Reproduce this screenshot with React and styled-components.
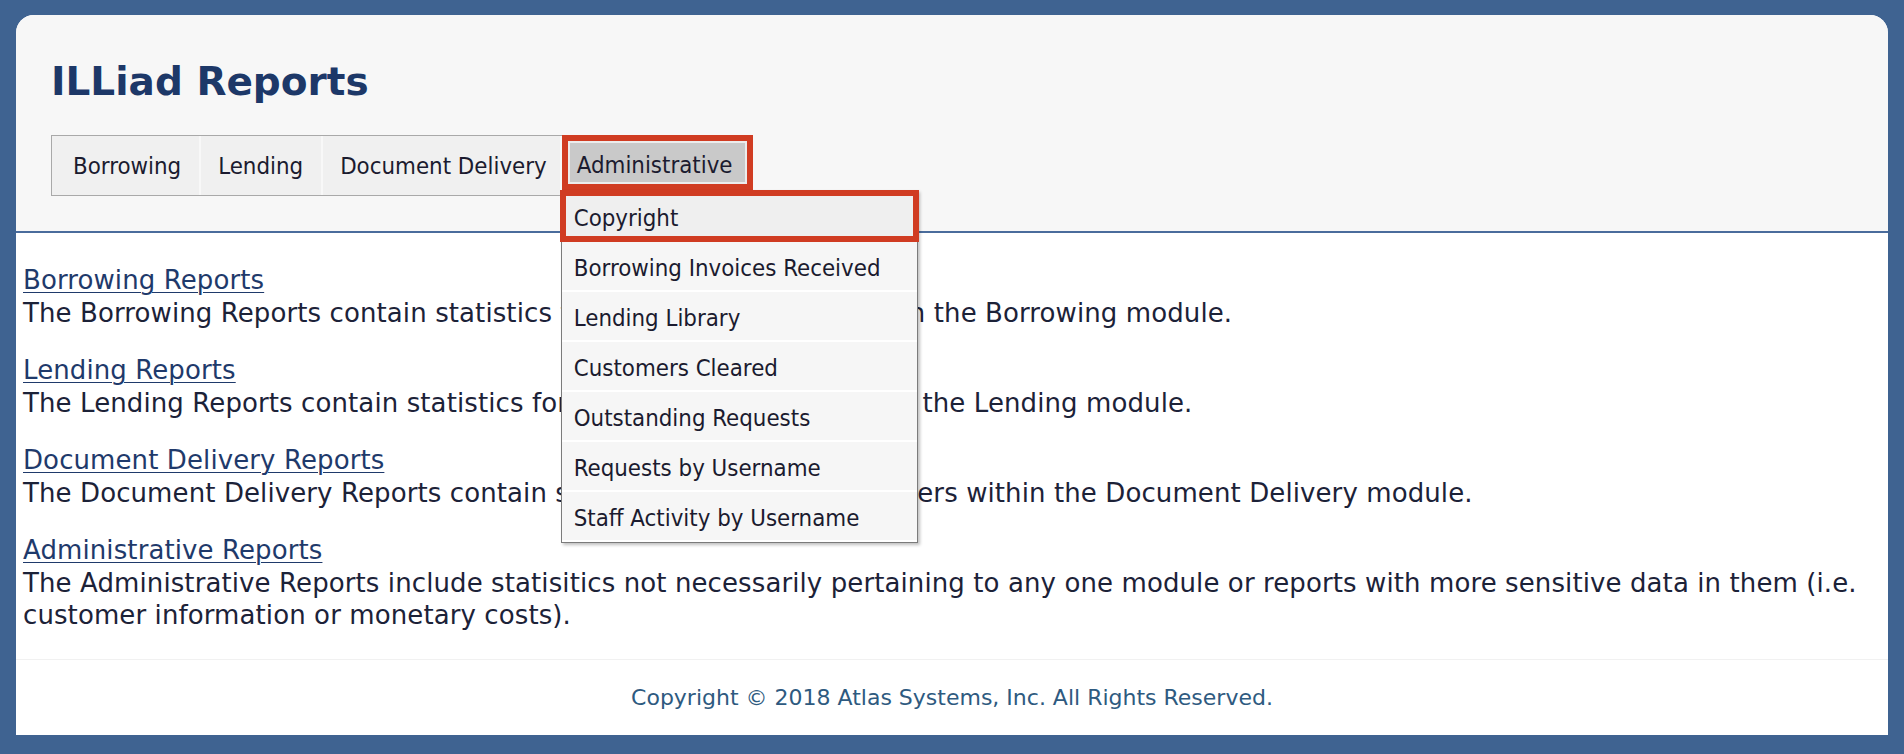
import styled, { createGlobalStyle } from "styled-components";

const GlobalStyle = createGlobalStyle`
  html, body {
    margin: 0;
    padding: 0;
    background: #3f6391;
  }
  body {
    font-family: "DejaVu Sans", Verdana, sans-serif;
  }
`;

const menuFont = `"DejaVu Sans Condensed", "Liberation Sans", sans-serif`;

const tabs = ["Borrowing", "Lending", "Document Delivery"];

const adminItems = [
  "Copyright",
  "Borrowing Invoices Received",
  "Lending Library",
  "Customers Cleared",
  "Outstanding Requests",
  "Requests by Username",
  "Staff Activity by Username",
];

const sections = [
  {
    title: "Borrowing Reports",
    text: "The Borrowing Reports contain statistics for requests by users within the Borrowing module.",
  },
  {
    title: "Lending Reports",
    text: "The Lending Reports contain statistics for requests and users within the Lending module.",
  },
  {
    title: "Document Delivery Reports",
    text: "The Document Delivery Reports contain statistics for requests by users within the Document Delivery module.",
  },
  {
    title: "Administrative Reports",
    text: "The Administrative Reports include statisitics not necessarily pertaining to any one module or reports with more sensitive data in them (i.e. customer information or monetary costs).",
  },
];

export default function App() {
  return (
    <Page>
      <GlobalStyle />
      <Panel>
        <Header>
          <Title>ILLiad Reports</Title>
          <TabBar>
            {tabs.map((t) => (
              <Tab key={t}>{t}</Tab>
            ))}
            <ActiveTab>
              Administrative
              <Dropdown>
                {adminItems.map((item, i) => (
                  <MenuItem key={item} $marked={i === 0}>
                    {item}
                  </MenuItem>
                ))}
              </Dropdown>
            </ActiveTab>
          </TabBar>
        </Header>

        <Content>
          {sections.map((s) => (
            <Section key={s.title}>
              <ReportLink href="#">{s.title}</ReportLink>
              <Description>{s.text}</Description>
            </Section>
          ))}
        </Content>

        <Footer>Copyright © 2018 Atlas Systems, Inc. All Rights Reserved.</Footer>
      </Panel>
    </Page>
  );
}

const Page = styled.div`
  padding: 15px 16px 19px 16px;
`;

const Panel = styled.div`
  background: #ffffff;
  border-radius: 18px 18px 0 0;
`;

const Header = styled.div`
  background: #f7f7f7;
  border-radius: 18px 18px 0 0;
  padding: 44px 35px 35px 35px;
  border-bottom: 2px solid #4a6c9c;
  position: relative;
  z-index: 2;
`;

const Title = styled.h1`
  margin: 0;
  font-family: "DejaVu Sans", Verdana, sans-serif;
  font-weight: 700;
  font-size: 39px;
  line-height: 46px;
  color: #1d3868;
`;

const TabBar = styled.div`
  margin-top: 30px;
  display: inline-flex;
  align-items: stretch;
  height: 61px;
  box-sizing: border-box;
  border: 1px solid #a9a9a9;
  background: #f7f7f7;
`;

const Tab = styled.div`
  display: flex;
  align-items: center;
  padding: 0 18px 0 17px;
  background: #f0f0f0;
  border-right: 2px solid #f8f8f8;
  font-family: ${menuFont};
  font-size: 23.8px;
  color: #1b1b2f;

  &:first-child {
    padding-left: 21px;
  }

  &:nth-child(3) {
    padding-right: 13px;
  }
`;

const ActiveTab = styled.div`
  position: relative;
  align-self: flex-start;
  display: flex;
  align-items: center;
  box-sizing: border-box;
  height: 55px;
  margin: -1px -1px 0 0;
  padding: 4px 14px 0 9px;
  background: #c9c9c9;
  border: 6px solid #d03c22;
  box-shadow: inset 0 0 0 2px #ececec;
  font-family: ${menuFont};
  font-size: 23.8px;
  color: #1b1b2f;
`;

const Dropdown = styled.div`
  position: absolute;
  top: calc(100% + 6px);
  left: -7px;
  width: 357px;
  box-sizing: border-box;
  background: #ffffff;
  border: 1px solid #7b7b7b;
  box-shadow: 2px 2px 3px rgba(0, 0, 0, 0.25);
  padding: 1px 0 2px 0;
  display: flex;
  flex-direction: column;
  gap: 2px;
`;

const MenuItem = styled.div`
  display: flex;
  align-items: center;
  box-sizing: border-box;
  height: 48px;
  padding: 4px 0 0 12px;
  background: ${(p) => (p.$marked ? "#efefef" : "#f6f6f6")};
  box-shadow: ${(p) =>
    p.$marked ? "0 0 0 2px #d03c22, inset 0 0 0 4px #d03c22" : "none"};
  font-family: ${menuFont};
  font-size: 23.8px;
  color: #1b1b2f;
  white-space: nowrap;
`;

const Content = styled.div`
  padding: 31px 7px 27px 7px;
  display: flex;
  flex-direction: column;
  gap: 25px;
  font-family: "DejaVu Sans", Verdana, sans-serif;
  font-size: 26px;
  letter-spacing: 0.1px;
  line-height: 32.5px;
  color: #1c2238;
`;

const Section = styled.div``;

const ReportLink = styled.a`
  color: #1f3a6b;
  text-decoration: underline;
  text-decoration-thickness: 1px;
  text-underline-offset: 3px;
`;

const Description = styled.div``;

const Footer = styled.div`
  border-top: 1px solid #f1f1f1;
  height: 75px;
  display: flex;
  align-items: center;
  justify-content: center;
  font-family: "DejaVu Sans", Verdana, sans-serif;
  font-size: 22px;
  color: #2e5a80;
`;
